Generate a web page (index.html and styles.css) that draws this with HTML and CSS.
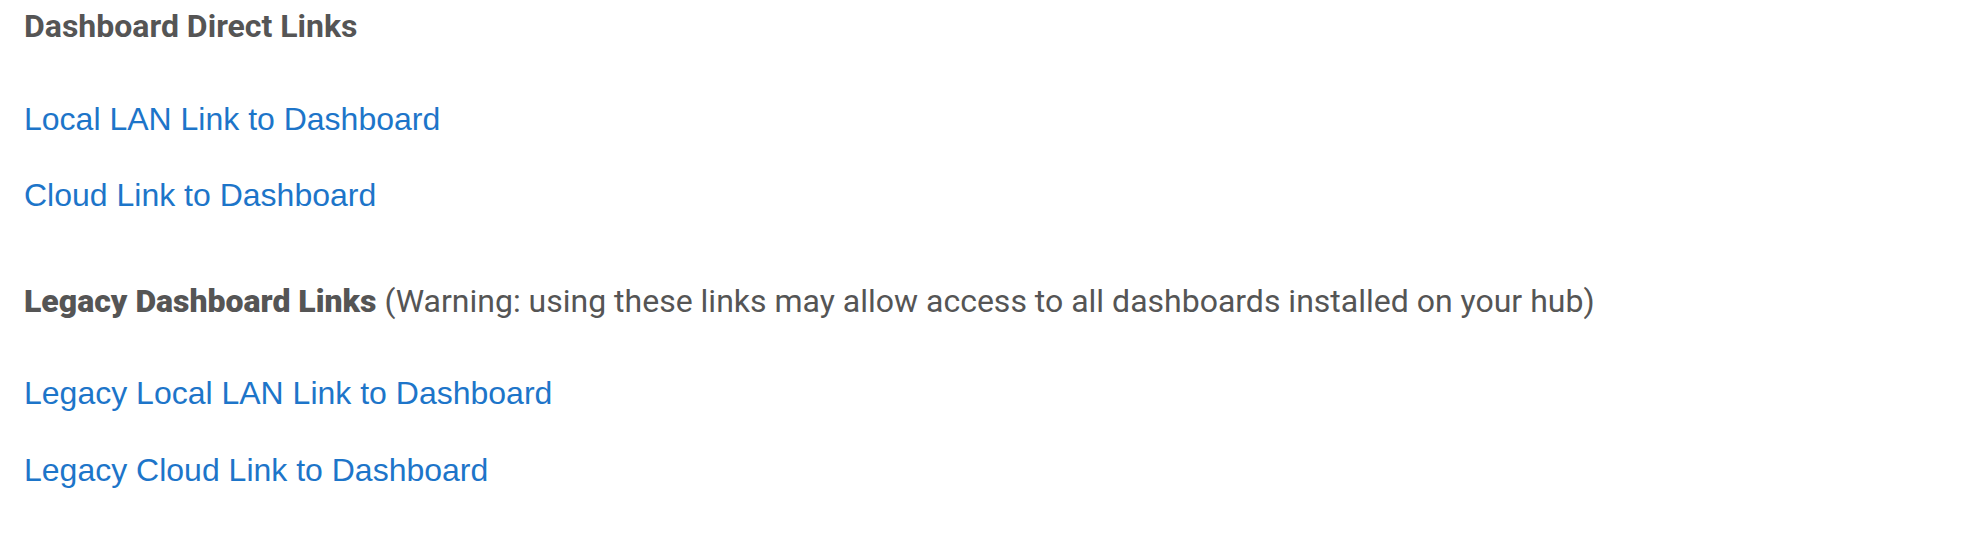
FILE: index.html
```html
<!DOCTYPE html>
<html lang="en">
<head>
    <meta charset="UTF-8">
    <meta name="viewport" content="width=device-width, initial-scale=1.0">
    <title>Dashboard Links</title>
    <link rel="stylesheet" href="styles.css">
</head>
<body>
    <div class="page">
        <section class="link-group">
            <h2 class="group-title">Dashboard Direct Links</h2>
            <ul class="link-list">
                <li><a href="#">Local LAN Link to Dashboard</a></li>
                <li><a href="#">Cloud Link to Dashboard</a></li>
            </ul>
        </section>

        <section class="link-group legacy">
            <p class="group-title"><b>Legacy Dashboard Links</b> <span class="note">(Warning: using these links may allow access to all dashboards installed on your hub)</span></p>
            <ul class="link-list">
                <li><a href="#">Legacy Local LAN Link to Dashboard</a></li>
                <li><a href="#">Legacy Cloud Link to Dashboard</a></li>
            </ul>
        </section>
    </div>
</body>
</html>
```

FILE: styles.css
```css
* {
    margin: 0;
    padding: 0;
    box-sizing: border-box;
}

body {
    font-family: Roboto, 'Liberation Sans', sans-serif;
    font-size: 32px;
    line-height: 40px;
    background: #fff;
    color: #555;
}

.page {
    padding: 6px 24px 0;
}

.group-title {
    font-size: 32px;
    line-height: 40px;
    font-weight: 700;
    color: #555;
}

.group-title .note {
    font-weight: 400;
}

.link-list {
    list-style: none;
    margin-top: 53px;
    display: flex;
    flex-direction: column;
    gap: 36px;
}

.link-list li {
    font-family: 'Liberation Sans', Arial, sans-serif;
    font-size: 32px;
    line-height: 40px;
}

.link-list a {
    color: #1d75c9;
    text-decoration: none;
}

.legacy {
    margin-top: 66px;
}

.legacy .link-list {
    margin-top: 52px;
    gap: 37px;
}
```
